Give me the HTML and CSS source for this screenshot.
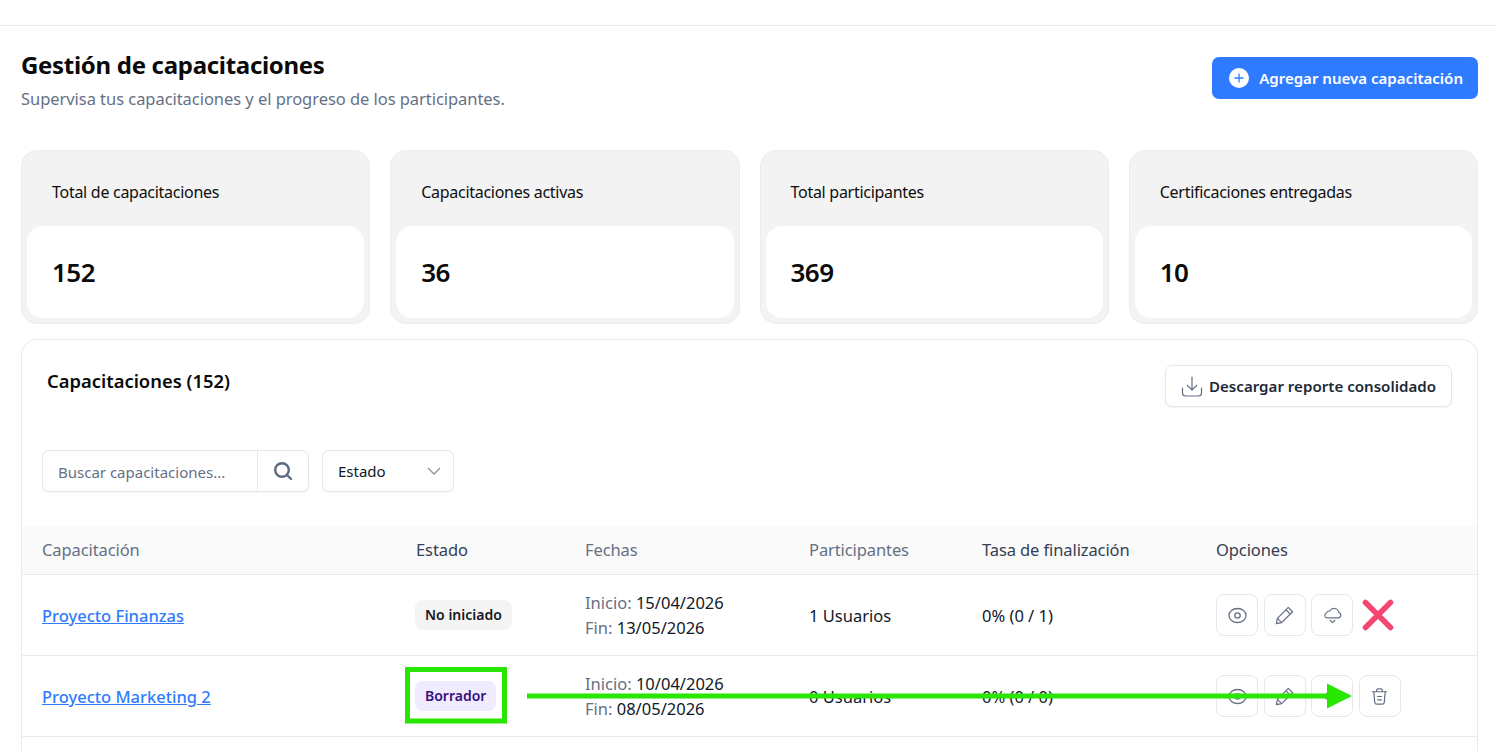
FILE: index.html
```html
<!doctype html>
<html lang="es">
<head>
    <meta charset="utf-8"/>
    <title>Gestión de capacitaciones</title>
    <link rel="stylesheet" href="styles.css">
</head>
<body>
    <div class="topbar"></div>
    <main class="content">
        <header class="page-head">
            <div>
                <h1>Gestión de capacitaciones</h1>
                <p class="subtitle">Supervisa tus capacitaciones y el progreso de los participantes.</p>
            </div>
            <button class="btn-primary">
                <svg class="plus" width="20" height="20" viewBox="0 0 20 20"><circle cx="10" cy="10" r="10" fill="#fff"/><path d="M10 5.500v9M5.500 10h9" stroke="#2f7bff" stroke-width="1.300"/></svg>
                Agregar nueva capacitación
            </button>
        </header>

        <section class="stats">
            <div class="stat"><div class="stat-label">Total de capacitaciones</div><div class="stat-value">152</div></div>
            <div class="stat"><div class="stat-label">Capacitaciones activas</div><div class="stat-value">36</div></div>
            <div class="stat"><div class="stat-label">Total participantes</div><div class="stat-value">369</div></div>
            <div class="stat"><div class="stat-label">Certificaciones entregadas</div><div class="stat-value">10</div></div>
        </section>

        <section class="panel">
            <div class="panel-head">
                <h2>Capacitaciones (152)</h2>
                <button class="btn-outline">
                    <svg width="22" height="22" viewBox="0 0 22 22" fill="none" stroke="#667085" stroke-width="1.200" stroke-linecap="round" stroke-linejoin="round"><path d="M1.500 13v5a3 3 0 0 0 3 3h13a3 3 0 0 0 3-3v-5"/><path d="M11 2v13M6.500 10.500 11 15l4.500-4.500"/></svg>
                    Descargar reporte consolidado
                </button>
            </div>

            <div class="filters">
                <div class="search">
                    <span class="search-input">Buscar capacitaciones...</span>
                    <span class="search-btn">
                        <svg width="20" height="20" viewBox="0 0 20 20" fill="none" stroke="#5b6b80" stroke-width="2.400" stroke-linecap="round"><circle cx="9" cy="9" r="6.800"/><path d="m14 14 4 4"/></svg>
                    </span>
                </div>
                <div class="select">
                    Estado
                    <svg width="14" height="8" viewBox="0 0 14 8" fill="none" stroke="#8a93a0" stroke-width="1.300"><path d="m1 1 6 6 6-6"/></svg>
                </div>
            </div>

            <table class="grid">
                <thead>
                    <tr>
                        <th class="c-name">Capacitación</th>
                        <th class="c-state dark">Estado</th>
                        <th class="c-date">Fechas</th>
                        <th class="c-part">Participantes</th>
                        <th class="c-rate dark">Tasa de finalización</th>
                        <th class="dark">Opciones</th>
                    </tr>
                </thead>
                <tbody>
                    <tr>
                        <td><a href="#">Proyecto Finanzas</a></td>
                        <td class="flush"><span class="tag tag-grey">No iniciado</span></td>
                        <td class="flush dates"><span>Inicio:</span> 15/04/2026<br><span>Fin:</span> 13/05/2026</td>
                        <td>1 Usuarios</td>
                        <td>0% (0 / 1)</td>
                        <td class="flush">
                            <div class="opts">
                                <span class="opt"><svg class="ico"><use href="#i-eye"/></svg></span>
                                <span class="opt"><svg class="ico"><use href="#i-pen"/></svg></span>
                                <span class="opt"><svg class="ico"><use href="#i-cloud"/></svg></span>
                                <svg class="cross" width="32" height="32" viewBox="0 0 32 32"><path d="M3.500 3.500l25 25M28.500 3.500l-25 25" stroke="#f4476f" stroke-width="5.500" stroke-linecap="round"/></svg>
                            </div>
                        </td>
                    </tr>
                    <tr>
                        <td><a href="#">Proyecto Marketing 2</a></td>
                        <td class="flush"><span class="tag tag-purple">Borrador</span></td>
                        <td class="flush dates"><span>Inicio:</span> 10/04/2026<br><span>Fin:</span> 08/05/2026</td>
                        <td>0 Usuarios</td>
                        <td>0% (0 / 0)</td>
                        <td class="flush">
                            <div class="opts">
                                <span class="opt"><svg class="ico"><use href="#i-eye"/></svg></span>
                                <span class="opt"><svg class="ico"><use href="#i-pen"/></svg></span>
                                <span class="opt"><svg class="ico"><use href="#i-cloud"/></svg></span>
                                <span class="opt"><svg class="ico"><use href="#i-trash"/></svg></span>
                            </div>
                        </td>
                    </tr>
                </tbody>
            </table>
        </section>
    </main>

    <!-- annotation drawn over the screenshot -->
    <svg class="annot" width="1496" height="751" viewBox="0 0 1496 751">
        <rect x="407.500" y="669.500" width="97" height="51.500" fill="none" stroke="#28e600" stroke-width="5"/>
        <path d="M527 693.500h800v-10l25 12.500-25 12.500v-10H527z" fill="#28e600"/>
    </svg>

    <svg width="0" height="0" class="defs">
        <symbol id="i-eye" viewBox="0 0 20 20"><g fill="none" stroke="#667085" stroke-width="1.400"><ellipse cx="10" cy="10" rx="9" ry="7.400"/><circle cx="10" cy="10" r="2.800"/></g></symbol>
        <symbol id="i-pen" viewBox="0 0 20 20"><g fill="none" stroke="#667085" stroke-width="1.300" stroke-linejoin="round"><path d="M14 1.500 18.500 6 7 17.500l-5.500 1 1-5.500z"/><path d="M11.500 4 16 8.500M2.500 13 7 17.500"/></g></symbol>
        <symbol id="i-cloud" viewBox="0 0 20 20"><g fill="none" stroke="#667085" stroke-width="1.200" stroke-linecap="round" stroke-linejoin="round"><path d="M4 12.500h12a2.900 2.900 0 0 0 .6-5.700 5 5 0 0 0-9.400-1.500 3.600 3.600 0 0 0-3.700 2.200A2.600 2.600 0 0 0 4 12.500z"/><path d="M7.500 15 10 17.500l2.500-2.500"/></g></symbol>
        <symbol id="i-trash" viewBox="0 0 20 20"><g fill="none" stroke="#667085" stroke-width="1.300" stroke-linecap="round" stroke-linejoin="round"><path d="M2.500 5h15M7 5V3.500A1.500 1.500 0 0 1 8.500 2h3A1.500 1.500 0 0 1 13 3.500V5"/><path d="M4 5l1 11.500A2 2 0 0 0 7 18h6a2 2 0 0 0 2-1.500L16 5"/><path d="M8 10h4M8 13.500h4"/></g></symbol>
    </svg>
</body>
</html>
```

FILE: styles.css
```css
html, body {
    height: 751px;
    overflow: hidden;
}
body {
    margin: 0;
    position: relative;
    background: #fff;
    color: #101828;
    font-family: "Noto Sans", "Open Sans", sans-serif;
    font-size: 16px;
}
.defs {
    position: absolute;
}

.topbar {
    height: 25px;
    border-bottom: 1px solid #e9eaeb;
}
.content {
    padding: 24px 18px 0 21px;
}

.page-head {
    display: flex;
    justify-content: space-between;
    align-items: flex-start;
    height: 100px;
}
h1 {
    margin: 0;
    font-size: 24px;
    line-height: 30px;
    font-weight: 700;
    color: #0a0a0a;
    letter-spacing: -0.3px;
}
.subtitle {
    margin: 7px 0 0;
    font-size: 16.5px;
    line-height: 24px;
    color: #667085;
    letter-spacing: -0.05px;
}
.btn-primary {
    display: flex;
    align-items: center;
    gap: 10px;
    height: 42px;
    margin-top: 7px;
    padding: 0 15px 0 17px;
    border: none;
    border-radius: 7px;
    background: #2f7bff;
    color: #fff;
    font: 600 15.050px "Noto Sans", sans-serif;
}

.stats {
    display: grid;
    grid-template-columns: repeat(4, 1fr);
    gap: 20px;
}
.stat {
    height: 174px;
    box-sizing: border-box;
    padding: 0 5px 5px;
    background: #f3f3f3;
    border: 1px solid #ececec;
    border-radius: 16px;
    display: flex;
    flex-direction: column;
}
.stat-label {
    height: 75px;
    padding: 29px 0 0 25px;
    box-sizing: border-box;
    font-size: 16px;
    line-height: 24px;
    color: #0f0f0f;
    letter-spacing: -0.28px;
}
.stat-value {
    flex: 1;
    display: flex;
    align-items: center;
    padding-left: 25px;
    background: #fff;
    border-radius: 16px;
    font-size: 26px;
    font-weight: 600;
    color: #0a0a0a;
    letter-spacing: -0.5px;
}

.panel {
    margin-top: 15px;
    border: 1px solid #e9eaeb;
    border-bottom: none;
    border-radius: 16px 16px 0 0;
    height: 412px;
    box-sizing: border-box;
}
.panel-head {
    display: flex;
    justify-content: space-between;
    align-items: flex-start;
    padding: 25px 25px 0;
    height: 110px;
    box-sizing: border-box;
}
h2 {
    margin: 3px 0 0;
    font-size: 18.400px;
    line-height: 26px;
    font-weight: 600;
    color: #0a0a0a;
}
.btn-outline {
    display: flex;
    align-items: center;
    gap: 6px;
    height: 42px;
    padding: 0 15px;
    background: #fff;
    border: 1px solid #e4e7ec;
    border-radius: 7px;
    box-shadow: 0 1px 2px rgba(16, 24, 40, 0.05);
    color: #1d2939;
    font: 600 15.100px "Noto Sans", sans-serif;
}

.filters {
    display: flex;
    gap: 13px;
    padding-left: 20px;
    height: 76px;
}
.search, .select {
    height: 42px;
    box-sizing: border-box;
    background: #fff;
    border: 1px solid #e4e7ec;
    border-radius: 7px;
    box-shadow: 0 1px 2px rgba(16, 24, 40, 0.05);
    display: flex;
    align-items: center;
}
.search {
    width: 267px;
}
.search-input {
    flex: 1;
    padding: 2px 0 0 15px;
    font-size: 15px;
    color: #667085;
}
.search-btn {
    width: 50px;
    height: 100%;
    border-left: 1px solid #e4e7ec;
    display: flex;
    align-items: center;
    justify-content: center;
}
.select {
    width: 132px;
    padding: 0 12px 0 15px;
    justify-content: space-between;
    font-size: 15px;
    color: #101828;
}

.grid {
    width: 100%;
    border-collapse: collapse;
    table-layout: fixed;
    font-size: 16.500px;
}
.grid th {
    height: 46px;
    padding: 0 0 2px 20px;
    background: #fafafa;
    border-bottom: 1px solid #e9eaeb;
    text-align: left;
    font-weight: 400;
    color: #667085;
    letter-spacing: -0.1px;
}
.grid th.dark {
    color: #344054;
}
.c-name { width: 354px; }
.c-state { width: 149px; }
.c-date { width: 204px; }
.c-part { width: 153px; }
.c-rate { width: 214px; }
.grid td {
    height: 79px;
    padding: 1px 0 0 20px;
    border-bottom: 1px solid #e9eaeb;
    color: #101828;
}
.grid td.flush {
    padding-top: 0;
    height: 80px;
}
.grid a {
    color: #2f7bff;
    font-weight: 500;
}
.dates {
    line-height: 25px;
}
.dates span {
    color: #667085;
}
.tag {
    display: inline-block;
    margin-left: -1px;
    padding: 0 10px;
    height: 30px;
    line-height: 30px;
    border-radius: 8px;
    font-size: 14px;
    font-weight: 600;
}
.tag-grey {
    background: #f4f4f5;
    color: #18181b;
}
.tag-purple {
    background: #f0ebff;
    color: #35107f;
}
.opts {
    display: flex;
    align-items: center;
    gap: 5.500px;
}
.opt {
    flex: none;
    width: 42px;
    height: 42px;
    box-sizing: border-box;
    border: 1px solid #e4e7ec;
    border-radius: 8px;
    display: flex;
    align-items: center;
    justify-content: center;
}
.ico {
    width: 19px;
    height: 19px;
}
.cross {
    flex: none;
    margin-left: 3px;
}

.annot {
    position: absolute;
    top: 0;
    left: 0;
    pointer-events: none;
}
```
